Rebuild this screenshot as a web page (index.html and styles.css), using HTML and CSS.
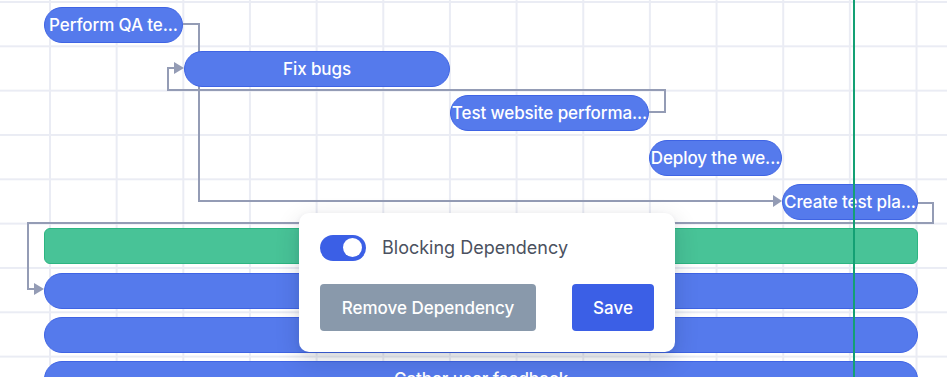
FILE: index.html
```html
<!DOCTYPE html>
<html lang="en">
<head>
    <meta charset="UTF-8">
    <meta name="viewport" content="width=device-width, initial-scale=1.0">
    <title>Timeline - dependency editor</title>
    <link rel="stylesheet" href="styles.css">
</head>
<body>
    <div class="chart">
        <!-- dependency arrows, drawn under the bars -->
        <svg class="links" width="947" height="377" viewBox="0 0 947 377">
            <g fill="none" stroke="#949cb5" stroke-width="2">
                <path d="M183 24 H199 V201 H774"/>
                <path d="M649 112 H665 V90 H168 V68 H176"/>
                <path d="M917 203 H933 V223 H28 V289 H36"/>
            </g>
            <g fill="#949cb5">
                <polygon points="773,195 782,201 773,207"/>
                <polygon points="174,62 184,68 174,74"/>
                <polygon points="34,283 44,289 34,295"/>
            </g>
        </svg>

        <div class="rows">
            <div class="row"><div class="bar" style="margin-left:44px;width:139px" title="Perform QA testing">Perform QA te...</div></div>
            <div class="row"><div class="bar" style="margin-left:184px;width:266px">Fix bugs</div></div>
            <div class="row"><div class="bar" style="margin-left:450px;width:199px" title="Test website performance">Test website performa...</div></div>
            <div class="row"><div class="bar" style="margin-left:649px;width:133px" title="Deploy the website">Deploy the we...</div></div>
            <div class="row"><div class="bar" style="margin-left:782px;width:136px" title="Create test plan">Create test pla...</div></div>
            <div class="row"><div class="bar bar-group" style="margin-left:44px;width:874px"></div></div>
            <div class="row"><div class="bar" style="margin-left:44px;width:874px"></div></div>
            <div class="row"><div class="bar" style="margin-left:44px;width:874px"></div></div>
            <div class="row"><div class="bar" style="margin-left:44px;width:874px">Gather user feedback</div></div>
        </div>

        <div class="today"></div>

        <!-- edit dependency popover -->
        <div class="popover">
            <div class="toggle-row">
                <span class="toggle on"><span class="knob"></span></span>
                <span class="toggle-label">Blocking Dependency</span>
            </div>
            <div class="actions">
                <button class="btn btn-muted">Remove Dependency</button>
                <button class="btn btn-primary">Save</button>
            </div>
        </div>
    </div>
</body>
</html>
```

FILE: styles.css
```css
        body {
            margin: 0;
            padding: 0;
            font-family: Inter, 'Noto Sans', sans-serif;
            background-color: #fff;
        }
        .chart {
            position: relative;
            width: 947px;
            height: 377px;
            overflow: hidden;
            background-color: #fff;
            background-image:
                linear-gradient(to right, #eaecf4 2px, transparent 2px),
                linear-gradient(to bottom, #eaecf4 2px, transparent 2px);
            background-size: 66.667px 44.333px;
            background-position: 49px 1px;
        }
        .links {
            position: absolute;
            left: 0;
            top: 0;
            z-index: 0;
        }
        .rows {
            position: relative;
            z-index: 1;
            padding-top: 2.5px;
        }
        .row {
            height: 44.333px;
            display: flex;
            align-items: center;
        }
        .bar {
            box-sizing: border-box;
            height: 36px;
            line-height: 34px;
            background-color: #557aec;
            border: 1px solid #3f64e4;
            border-radius: 18px;
            color: #fff;
            font-size: 17px;
            font-weight: 500;
            letter-spacing: -0.1px;
            text-align: center;
            white-space: nowrap;
            overflow: hidden;
            text-overflow: ellipsis;
        }
        .bar-group {
            background-color: #48c397;
            border-color: #2db582;
            border-radius: 6px;
        }
        .today {
            position: absolute;
            top: 0;
            bottom: 0;
            left: 853px;
            width: 2px;
            background-color: #13a074;
            z-index: 2;
        }
        .popover {
            position: absolute;
            left: 299px;
            top: 213px;
            width: 376px;
            box-sizing: border-box;
            padding: 21px;
            background-color: #fff;
            border-radius: 10px;
            box-shadow: 0 8px 24px rgba(15, 23, 42, 0.16), 0 2px 6px rgba(15, 23, 42, 0.06);
            z-index: 3;
        }
        .toggle-row {
            display: flex;
            align-items: center;
            gap: 16px;
            height: 27px;
        }
        .toggle {
            box-sizing: border-box;
            display: inline-flex;
            align-items: center;
            justify-content: flex-end;
            width: 46px;
            height: 26px;
            padding: 0 4px;
            border-radius: 13px;
            background-color: #3b5fe6;
        }
        .knob {
            width: 19px;
            height: 19px;
            border-radius: 50%;
            background-color: #fff;
        }
        .toggle-label {
            font-size: 18px;
            color: #4b5160;
        }
        .actions {
            display: flex;
            justify-content: space-between;
            margin-top: 23px;
        }
        .btn {
            height: 47px;
            border: none;
            border-radius: 4px;
            color: #fff;
            font-family: Inter, 'Noto Sans', sans-serif;
            font-size: 17px;
            font-weight: 500;
            cursor: pointer;
        }
        .btn-muted {
            width: 216px;
            background-color: #8999ab;
        }
        .btn-primary {
            width: 82px;
            background-color: #3b5fe6;
        }
```
